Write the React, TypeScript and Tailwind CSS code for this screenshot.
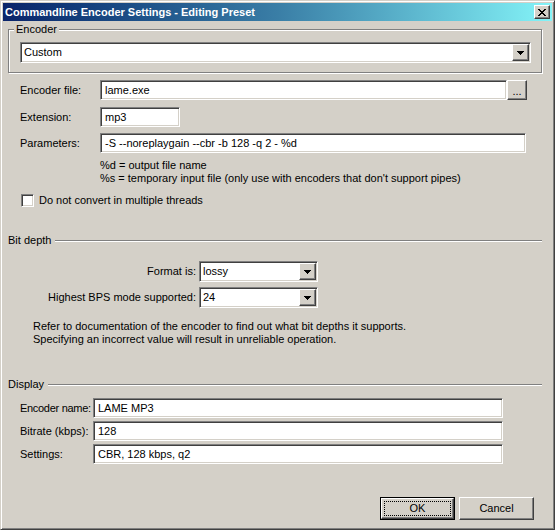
import React from 'react';

const font = { fontFamily: '"Liberation Sans", Arial, sans-serif' };

// classic 3d edges
const sunken =
  'bg-white border border-t-[#808080] border-l-[#808080] border-b-white border-r-white shadow-[inset_1px_1px_#404040,inset_-1px_-1px_#d4d0c8]';
const raised =
  'bg-[#d4d0c8] border border-t-white border-l-white border-b-[#404040] border-r-[#404040] shadow-[inset_-1px_-1px_#808080,inset_1px_1px_#d4d0c8]';

function Arrow() {
  return (
    <svg width="7" height="4" viewBox="0 0 7 4" shapeRendering="crispEdges">
      <path d="M0 0h7v1H0zM1 1h5v1H1zM2 2h3v1H2zM3 3h1v1H3z" fill="#000" />
    </svg>
  );
}

function CloseGlyph() {
  return (
    <svg width="8" height="7" viewBox="0 0 8 7" shapeRendering="crispEdges">
      <path
        d="M0 0h2v1H0zM6 0h2v1H6zM1 1h2v1H1zM5 1h2v1H5zM2 2h4v1H2zM3 3h2v1H3zM2 4h4v1H2zM1 5h2v1H1zM5 5h2v1H5zM0 6h2v1H0zM6 6h2v1H6z"
        fill="#000"
      />
    </svg>
  );
}

function Combo({ value, width }: { value: string; width: string }) {
  return (
    <div className={`${sunken} ${width} h-[21px] flex items-center p-[1px] shrink-0`}>
      <span className="flex-1 pl-[2px] leading-[13px]">{value}</span>
      <div className={`${raised} w-[17px] h-[17px] flex items-center justify-center`}>
        <Arrow />
      </div>
    </div>
  );
}

function TextBox({ value, width }: { value: string; width: string }) {
  return (
    <div className={`${sunken} ${width} h-[20px] flex items-center pl-[4px] leading-[13px] shrink-0 whitespace-nowrap`}>
      {value}
    </div>
  );
}

function Label({ text, width, tight }: { text: string; width: string; tight?: boolean }) {
  return (
    <span className={`${width} shrink-0 whitespace-nowrap leading-[13px] ${tight ? 'tracking-[-0.3px]' : ''}`}>
      {text}
    </span>
  );
}

function Separator({ label }: { label: string }) {
  return (
    <div className="flex items-center w-[534px] h-[13px] gap-[4px]">
      <span className="leading-[13px]">{label}</span>
      <div className="flex-1 h-[2px] border-t border-t-[#808080] border-b border-b-white" />
    </div>
  );
}

function Button({ label, isDefault }: { label: string; isDefault?: boolean }) {
  if (isDefault) {
    return (
      <div className="w-[75px] h-[23px] border border-black">
        <div className={`${raised} w-full h-full flex items-center justify-center p-[2px]`}>
          <div className="w-full h-full border border-dotted border-black flex items-center justify-center leading-[13px]">
            {label}
          </div>
        </div>
      </div>
    );
  }
  return (
    <div className={`${raised} w-[75px] h-[23px] flex items-center justify-center leading-[13px]`}>
      {label}
    </div>
  );
}

export default function App() {
  return (
    <div
      style={font}
      className="w-[555px] h-[530px] bg-[#d4d0c8] text-[11px] text-black border border-t-[#d4d0c8] border-l-[#d4d0c8] border-b-[#404040] border-r-[#404040] shadow-[inset_1px_1px_#fff,inset_-1px_-1px_#808080] p-[2px] flex flex-col select-none overflow-hidden"
    >
      {/* title bar */}
      <div className="h-[18px] shrink-0 flex items-center justify-between pl-[2px] pr-[2px] bg-linear-to-r from-[#0a246a] via-[#3a7ea6] to-[#84f4f8]">
        <span className="text-white font-bold leading-[13px]">
          Commandline Encoder Settings - Editing Preset
        </span>
        <div className={`${raised} w-[16px] h-[14px] flex items-center justify-center`}>
          <CloseGlyph />
        </div>
      </div>

      <div className="flex-1 flex flex-col pl-[5px]">
        {/* Encoder group */}
        <div className="relative mt-[8px] w-[534px] h-[44px] shrink-0 border border-[#808080] shadow-[inset_1px_1px_#fff,1px_1px_#fff] pt-[12px] pl-[11px]">
          <span className="absolute left-[5px] top-[-7px] px-[2px] bg-[#d4d0c8] leading-[13px]">Encoder</span>
          <Combo value="Custom" width="w-[511px]" />
        </div>

        <div className="flex flex-col pl-[12px] mt-[7px]">
          <div className="flex items-center">
            <Label text="Encoder file:" width="w-[80px]" />
            <TextBox value="lame.exe" width="w-[407px]" />
            <div className={`${raised} w-[20px] h-[20px] flex items-end justify-center pb-[4px] leading-[8px]`}>
              ...
            </div>
          </div>
          <div className="flex items-center mt-[7px]">
            <Label text="Extension:" width="w-[80px]" />
            <TextBox value="mp3" width="w-[80px]" />
          </div>
          <div className="flex items-center mt-[6px]">
            <Label text="Parameters:" width="w-[80px]" />
            <TextBox value="-S --noreplaygain --cbr -b 128 -q 2 - %d" width="w-[426px]" />
          </div>
          <div className="pl-[80px] mt-[6px] leading-[13px]">
            <div>%d = output file name</div>
            <div>%s = temporary input file (only use with encoders that don't support pipes)</div>
          </div>
          <div className="flex items-center mt-[9px] ml-[1px] gap-[5px]">
            <div className={`${sunken} w-[13px] h-[13px]`} />
            <span className="leading-[13px]">Do not convert in multiple threads</span>
          </div>
        </div>

        <div className="mt-[27px]">
          <Separator label="Bit depth" />
        </div>

        <div className="flex items-center mt-[14px]">
          <span className="w-[191px] shrink-0 text-right pr-[3px] leading-[13px]">Format is:</span>
          <Combo value="lossy" width="w-[119px]" />
        </div>
        <div className="flex items-center mt-[5px]">
          <span className="w-[191px] shrink-0 text-right pr-[3px] leading-[13px]">Highest BPS mode supported:</span>
          <Combo value="24" width="w-[119px]" />
        </div>
        <div className="pl-[25px] mt-[12px] leading-[13px]">
          <div>Refer to documentation of the encoder to find out what bit depths it supports.</div>
          <div>Specifying an incorrect value will result in unreliable operation.</div>
        </div>

        <div className="mt-[32px]">
          <Separator label="Display" />
        </div>

        <div className="flex flex-col pl-[12px] mt-[7px] gap-[3px]">
          <div className="flex items-center">
            <Label text="Encoder name:" width="w-[73px]" tight />
            <TextBox value="LAME MP3" width="w-[410px]" />
          </div>
          <div className="flex items-center">
            <Label text="Bitrate (kbps):" width="w-[73px]" />
            <TextBox value="128" width="w-[410px]" />
          </div>
          <div className="flex items-center">
            <Label text="Settings:" width="w-[73px]" />
            <TextBox value="CBR, 128 kbps, q2" width="w-[410px]" />
          </div>
        </div>

        <div className="flex justify-end gap-[4px] w-[526px] mt-[33px]">
          <Button label="OK" isDefault />
          <Button label="Cancel" />
        </div>
      </div>
    </div>
  );
}
